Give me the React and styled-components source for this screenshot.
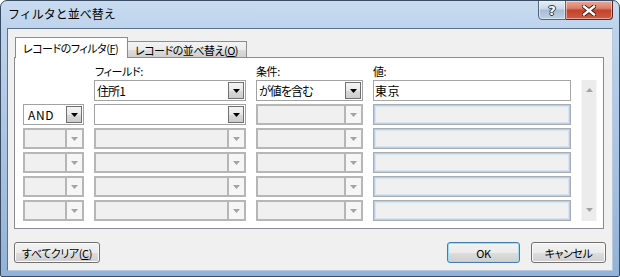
import React from 'react';
import styled, { createGlobalStyle } from 'styled-components';

const UI = `"Noto Sans CJK JP", "Noto Sans", sans-serif`;

const Global = createGlobalStyle`
  html, body { margin: 0; padding: 0; background: #ffffff; }
  body { font-family: ${UI}; }
  * { box-sizing: border-box; }
`;

const Window = styled.div`
  width: 620px;
  height: 277px;
  border: 1px solid #3a4c63;
  border-radius: 7px 7px 2px 2px;
  background: linear-gradient(180deg, #c8dbf0 0%, #bcd2ec 12%, #a9c3e3 55%, #92b2d9 100%);
  padding: 0 6px 5px;
  display: flex;
  flex-direction: column;
  overflow: hidden;
`;

const TitleBar = styled.div`
  flex: none;
  height: 27px;
  display: flex;
  align-items: flex-start;
  justify-content: space-between;
`;

const Title = styled.div`
  margin: 7px 0 0 1px;
  font: 12px/12px ${UI};
  color: #000;
  white-space: nowrap;
`;

const CaptionButtons = styled.div`
  display: flex;
  margin-top: -1px;
`;

const CaptionButton = styled.div`
  height: 20px;
  width: ${p => (p.close ? 47 : 28)}px;
  display: flex;
  align-items: center;
  justify-content: center;
  border: 1px solid ${p => (p.close ? '#5a2a22' : '#55667c')};
  border-left-width: ${p => (p.close ? 0 : 1)}px;
  border-radius: ${p => (p.close ? '0 0 4px 0' : '0 0 0 4px')};
  background: ${p =>
    p.close
      ? 'linear-gradient(180deg, #e9a998 0%, #dc806a 40%, #c4432c 52%, #cf5c45 100%)'
      : 'linear-gradient(180deg, #e6edf6 0%, #cbd9e8 42%, #aabdd4 52%, #bcd0e5 100%)'};
  box-shadow: inset 0 0 0 1px rgba(255, 255, 255, 0.45);
`;

const HelpGlyph = styled.span`
  font: bold 13px/13px "DejaVu Sans", sans-serif;
  color: #ffffff;
  text-shadow: 0 0 1px #2c3a4c, 1px 0 0 #2c3a4c, -1px 0 0 #2c3a4c, 0 1px 0 #2c3a4c, 0 -1px 0 #2c3a4c;
`;

const Client = styled.div`
  flex: none;
  height: 243px;
  background: #f0f0f0;
  border: 1px solid;
  border-color: #5d7189 #b9cade #b9cade #5d7189;
  padding: 8px 8px 8px 6px;
  display: flex;
  flex-direction: column;
`;

const TabStrip = styled.div`
  flex: none;
  height: 20px;
  display: flex;
  align-items: flex-end;
  padding-left: 1px;
  position: relative;
  z-index: 1;
`;

const Tab = styled.div`
  width: ${p => p.w}px;
  height: ${p => (p.active ? 21 : 16)}px;
  margin-bottom: ${p => (p.active ? -1 : 0)}px;
  margin-left: ${p => (p.first ? 0 : -1)}px;
  border: 1px solid #898c95;
  border-bottom: none;
  background: ${p =>
    p.active ? '#ffffff' : 'linear-gradient(180deg, #f3f3f3 0%, #ebebeb 50%, #dddddd 51%, #cfcfcf 100%)'};
  padding: ${p => (p.active ? '3px 0 0 7px' : '1px 0 0 7px')};
  font: 11px/14px ${UI};
  font-feature-settings: "palt";
  letter-spacing: -0.5px;
  color: #000;
  white-space: nowrap;
  position: relative;
  z-index: ${p => (p.active ? 2 : 1)};
`;

const Panel = styled.div`
  flex: none;
  height: 172px;
  border: 1px solid #898c95;
  background: #ffffff;
  padding: 7px 5px 7px 8px;
`;

const Grid = styled.div`
  display: grid;
  grid-template-columns: 61px 152px 107px 198px 16px;
  grid-template-rows: 12px repeat(6, 21px);
  column-gap: 10px;
  row-gap: 3px;
`;

const Label = styled.div`
  grid-column: ${p => p.col};
  padding-left: ${p => p.pad || 0}px;
  font: 11px/12px ${UI};
  font-feature-settings: "palt";
  letter-spacing: -0.4px;
  color: #000;
  white-space: nowrap;
`;

const Combo = styled.div`
  grid-column: ${p => p.col};
  height: 21px;
  display: flex;
  border: ${p => (p.disabled ? '2px solid #b6b6b6' : '1px solid #a2a2a2')};
  background: ${p => (p.disabled ? '#f0f0f0' : '#ffffff')};
  padding: ${p => (p.disabled ? '0' : '1px 1px 1px 0')};
`;

const ComboText = styled.div`
  flex: 1;
  padding-left: ${p => (p.latin ? 4 : 2)}px;
  font: 12px/17px ${UI};
  font-feature-settings: "palt";
  letter-spacing: ${p => (p.latin ? 0.6 : -0.9)}px;
  color: #000;
  white-space: nowrap;
  overflow: hidden;
`;

const DropButton = styled.div`
  flex: none;
  width: ${p => (p.disabled ? 17 : 16)}px;
  display: flex;
  align-items: center;
  justify-content: center;
  border: ${p => (p.disabled ? 'none' : '1px solid #707070')};
  border-left: ${p => (p.disabled ? '2px solid #b6b6b6' : '1px solid #707070')};
  background: ${p =>
    p.disabled ? '#f6f6f6' : 'linear-gradient(180deg, #f4f4f4 0%, #e8e8e8 50%, #d9d9d9 51%, #cdcdcd 100%)'};
`;

const ValueBox = styled.div`
  grid-column: 4;
  height: 21px;
  border: 1px solid ${p => (p.disabled ? '#a8adb2' : '#a4a6aa')};
  background: ${p => (p.disabled ? '#f0f0f0' : '#ffffff')};
  box-shadow: ${p => (p.disabled ? 'inset 0 0 0 1px #b9cfe9, inset 0 0 0 2px #d6e3f2' : 'none')};
  padding-left: 1px;
  font: 12px/19px ${UI};
  letter-spacing: 0.5px;
  color: #000;
  white-space: nowrap;
`;

const ScrollBar = styled.div`
  grid-column: 5;
  grid-row: 2 / span 6;
  background: #ececec;
  border-left: 1px solid #f7f7f7;
  border-right: 1px solid #f7f7f7;
  display: flex;
  flex-direction: column;
  justify-content: space-between;
  align-items: center;
  padding: 8px 0 9px;
`;

const ButtonRow = styled.div`
  flex: none;
  margin-top: 13px;
  margin-right: -2px;
  display: flex;
  align-items: center;
  gap: 11px;
`;

const Spacer = styled.div`
  flex: 1;
`;

const Button = styled.div`
  width: ${p => p.w}px;
  height: 21px;
  border: 1px solid ${p => (p.primary ? '#3c7fb1' : '#707070')};
  border-radius: 3px;
  background: linear-gradient(180deg, #f3f3f3 0%, #ebebeb 50%, #dddddd 51%, #cfcfcf 100%);
  box-shadow: inset 0 0 0 1px ${p => (p.primary ? '#9fdcf4' : '#fbfbfb')};
  display: flex;
  align-items: center;
  justify-content: center;
  font: 11px/14px ${UI};
  font-feature-settings: "palt";
  letter-spacing: -0.4px;
  color: #000;
  white-space: nowrap;
`;

const Tri = ({ color = '#000' }) => (
  <svg width="7" height="4" viewBox="0 0 7 4">
    <polygon points="0,0 7,0 3.5,4" fill={color} />
  </svg>
);

const UpTri = () => (
  <svg width="7" height="4" viewBox="0 0 7 4">
    <polygon points="0,4 7,4 3.5,0" fill="#a3a3a3" />
  </svg>
);

const CloseGlyph = () => (
  <svg width="14" height="11" viewBox="0 0 14 11">
    <path d="M2 1.5 L12 9.5 M12 1.5 L2 9.5" stroke="#3a1510" strokeWidth="4.2" strokeLinecap="square" />
    <path d="M2 1.5 L12 9.5 M12 1.5 L2 9.5" stroke="#ffffff" strokeWidth="2.4" strokeLinecap="square" />
  </svg>
);

const ComboBox = ({ col, text, disabled, latin }) => (
  <Combo col={col} disabled={disabled}>
    <ComboText latin={latin}>{text}</ComboText>
    <DropButton disabled={disabled}>
      <Tri color={disabled ? '#a3a3a3' : '#000'} />
    </DropButton>
  </Combo>
);

const rows = [
  { join: null, field: '住所1', fieldOn: true, cond: 'が値を含む', condOn: true, value: '東京', valueOn: true },
  { join: 'AND', field: '', fieldOn: true, cond: '', condOn: false, value: '', valueOn: false },
  { join: '', field: '', fieldOn: false, cond: '', condOn: false, value: '', valueOn: false },
  { join: '', field: '', fieldOn: false, cond: '', condOn: false, value: '', valueOn: false },
  { join: '', field: '', fieldOn: false, cond: '', condOn: false, value: '', valueOn: false },
  { join: '', field: '', fieldOn: false, cond: '', condOn: false, value: '', valueOn: false },
];

export default function App() {
  return (
    <>
      <Global />
      <Window>
        <TitleBar>
          <Title>フィルタと並べ替え</Title>
          <CaptionButtons>
            <CaptionButton>
              <HelpGlyph>?</HelpGlyph>
            </CaptionButton>
            <CaptionButton close>
              <CloseGlyph />
            </CaptionButton>
          </CaptionButtons>
        </TitleBar>
        <Client>
          <TabStrip>
            <Tab active first w={113}>
              レコードのフィルタ(<u>F</u>)
            </Tab>
            <Tab w={120}>
              レコードの並べ替え(<u>O</u>)
            </Tab>
          </TabStrip>
          <Panel>
            <Grid>
              <Label col={2} pad={1}>フィールド:</Label>
              <Label col={3}>条件:</Label>
              <Label col={4}>値:</Label>
              {rows.map((r, i) => (
                <React.Fragment key={i}>
                  {r.join === null ? (
                    <div style={{ gridColumn: 1 }} />
                  ) : (
                    <ComboBox col={1} latin text={r.join} disabled={r.join !== 'AND'} />
                  )}
                  <ComboBox col={2} text={r.field} disabled={!r.fieldOn} />
                  <ComboBox col={3} text={r.cond} disabled={!r.condOn} />
                  <ValueBox disabled={!r.valueOn}>{r.value}</ValueBox>
                </React.Fragment>
              ))}
              <ScrollBar>
                <UpTri />
                <Tri color="#a3a3a3" />
              </ScrollBar>
            </Grid>
          </Panel>
          <ButtonRow>
            <Button w={86}>
              すべてクリア(<u>C</u>)
            </Button>
            <Spacer />
            <Button primary w={73}>OK</Button>
            <Button w={75}>キャンセル</Button>
          </ButtonRow>
        </Client>
      </Window>
    </>
  );
}
